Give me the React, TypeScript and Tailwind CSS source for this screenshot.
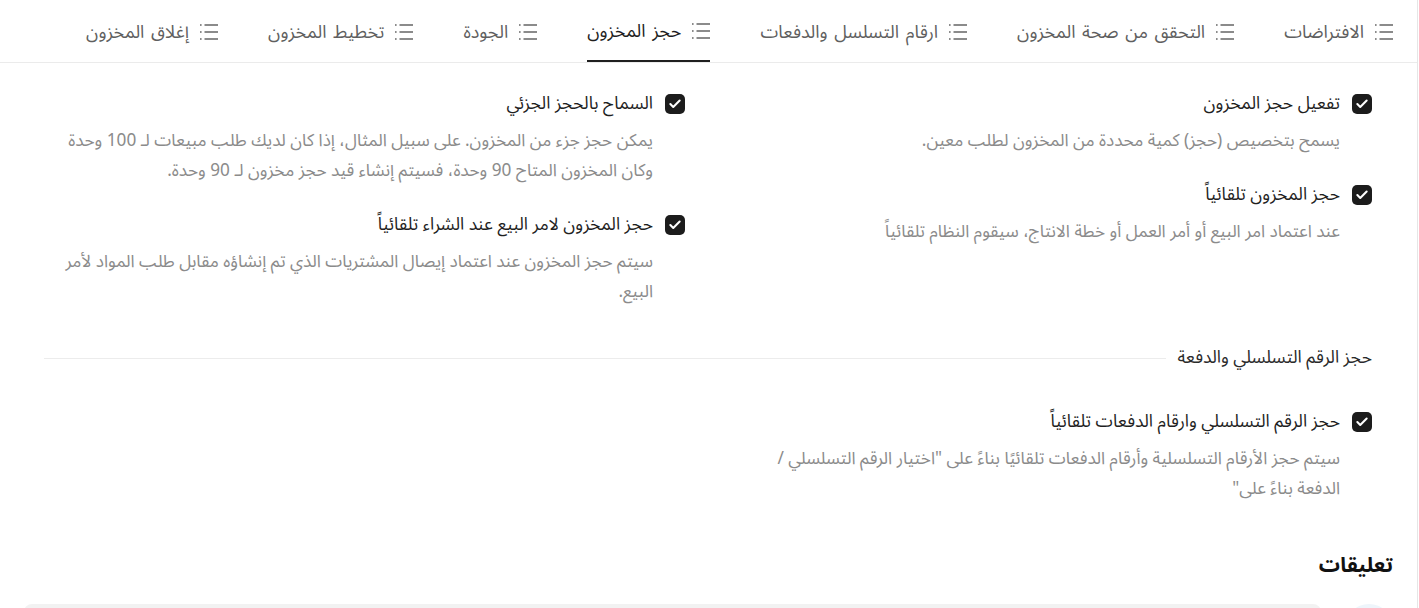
import { Check } from "lucide-react";

const tabs = [
  "الافتراضات",
  "التحقق من صحة المخزون",
  "ارقام التسلسل والدفعات",
  "حجز المخزون",
  "الجودة",
  "تخطيط المخزون",
  "إغلاق المخزون",
];

function ListIcon() {
  return (
    <svg width="19" height="16" viewBox="0 0 19 16" fill="none" stroke="#666" strokeWidth="1.6" className="shrink-0">
      <path d="M1 1h1.6M1 8h1.6M1 15h1.6" />
      <path d="M5.5 1H19M5.5 8H19M5.5 15H19" />
    </svg>
  );
}

function Box() {
  return (
    <span className="flex h-5 w-5 shrink-0 items-center justify-center rounded-[5px] bg-[#1c1c1c]">
      <Check className="h-3.5 w-3.5 text-white" strokeWidth={3.5} />
    </span>
  );
}

function Option({ label, desc }: { label: string; desc: string }) {
  return (
    <div>
      <div className="flex items-center gap-3">
        <Box />
        <span className="text-[17.5px] leading-6 text-[#1f1f1f]">{label}</span>
      </div>
      <p className="mt-[10px] pr-8 text-[17.2px] leading-[30px] text-[#8b8b8b]">{desc}</p>
    </div>
  );
}

export default function App() {
  return (
    <div
      dir="rtl"
      className="h-[608px] w-[1418px] overflow-hidden border-r border-[#e6e6e6] bg-white"
      style={{ fontFamily: '"Noto Sans Arabic", "Noto Sans", "DejaVu Sans", sans-serif' }}
    >
      {/* tabs */}
      <div className="flex h-[63px] items-stretch gap-[50px] border-b border-[#ebebeb] pr-6">
        {tabs.map((t) => {
          const active = t === "حجز المخزون";
          return (
            <div
              key={t}
              className={
                active
                  ? "flex items-center gap-2.5 border-b-2 border-[#1f1f1f] pt-[2px] text-[18px] text-[#1f1f1f] [word-spacing:2px]"
                  : "flex items-center gap-2.5 pt-[2px] text-[18px] text-[#5f5f5f] [word-spacing:2px]"
              }
            >
              <ListIcon />
              <span>{t}</span>
            </div>
          );
        })}
      </div>

      <div className="px-6">
        <div className="pl-5 pr-[21px] pt-[29px]">
          <div className="grid grid-cols-2 gap-x-[46px]">
            <div className="space-y-[27px]">
              <Option label="تفعيل حجز المخزون" desc="يسمح بتخصيص (حجز) كمية محددة من المخزون لطلب معين." />
              <Option
                label="حجز المخزون تلقائياً"
                desc="عند اعتماد امر البيع أو أمر العمل أو خطة الانتاج، سيقوم النظام تلقائياً"
              />
            </div>
            <div className="space-y-[27px]">
              <Option
                label="السماح بالحجز الجزئي"
                desc="يمكن حجز جزء من المخزون. على سبيل المثال، إذا كان لديك طلب مبيعات لـ 100 وحدة وكان المخزون المتاح 90 وحدة، فسيتم إنشاء قيد حجز مخزون لـ 90 وحدة."
              />
              <Option
                label="حجز المخزون لامر البيع عند الشراء تلقائياً"
                desc="سيتم حجز المخزون عند اعتماد إيصال المشتريات الذي تم إنشاؤه مقابل طلب المواد لأمر البيع."
              />
            </div>
          </div>

          <div className="mt-[39px] flex items-center gap-3">
            <span className="text-[17.5px] leading-6 text-[#2a2a2a]">حجز الرقم التسلسلي والدفعة</span>
            <div className="h-px flex-1 bg-[#ececec]" />
          </div>

          <div className="mt-10 grid grid-cols-2 gap-x-[46px]">
            <Option
              label="حجز الرقم التسلسلي وارقام الدفعات تلقائياً"
              desc={'سيتم حجز الأرقام التسلسلية وأرقام الدفعات تلقائيًا بناءً على "اختيار الرقم التسلسلي / الدفعة بناءً على"'}
            />
          </div>
        </div>

        <h2 className="mt-[45px] text-[21px] font-bold leading-8 text-[#111]">تعليقات</h2>
        <div className="mt-[23px] flex gap-6">
          <div className="h-12 w-12 shrink-0 rounded-full bg-[#eef5fb]" />
          <div className="h-20 flex-1 rounded-lg bg-[#f2f2f2]" />
        </div>
      </div>
    </div>
  );
}
